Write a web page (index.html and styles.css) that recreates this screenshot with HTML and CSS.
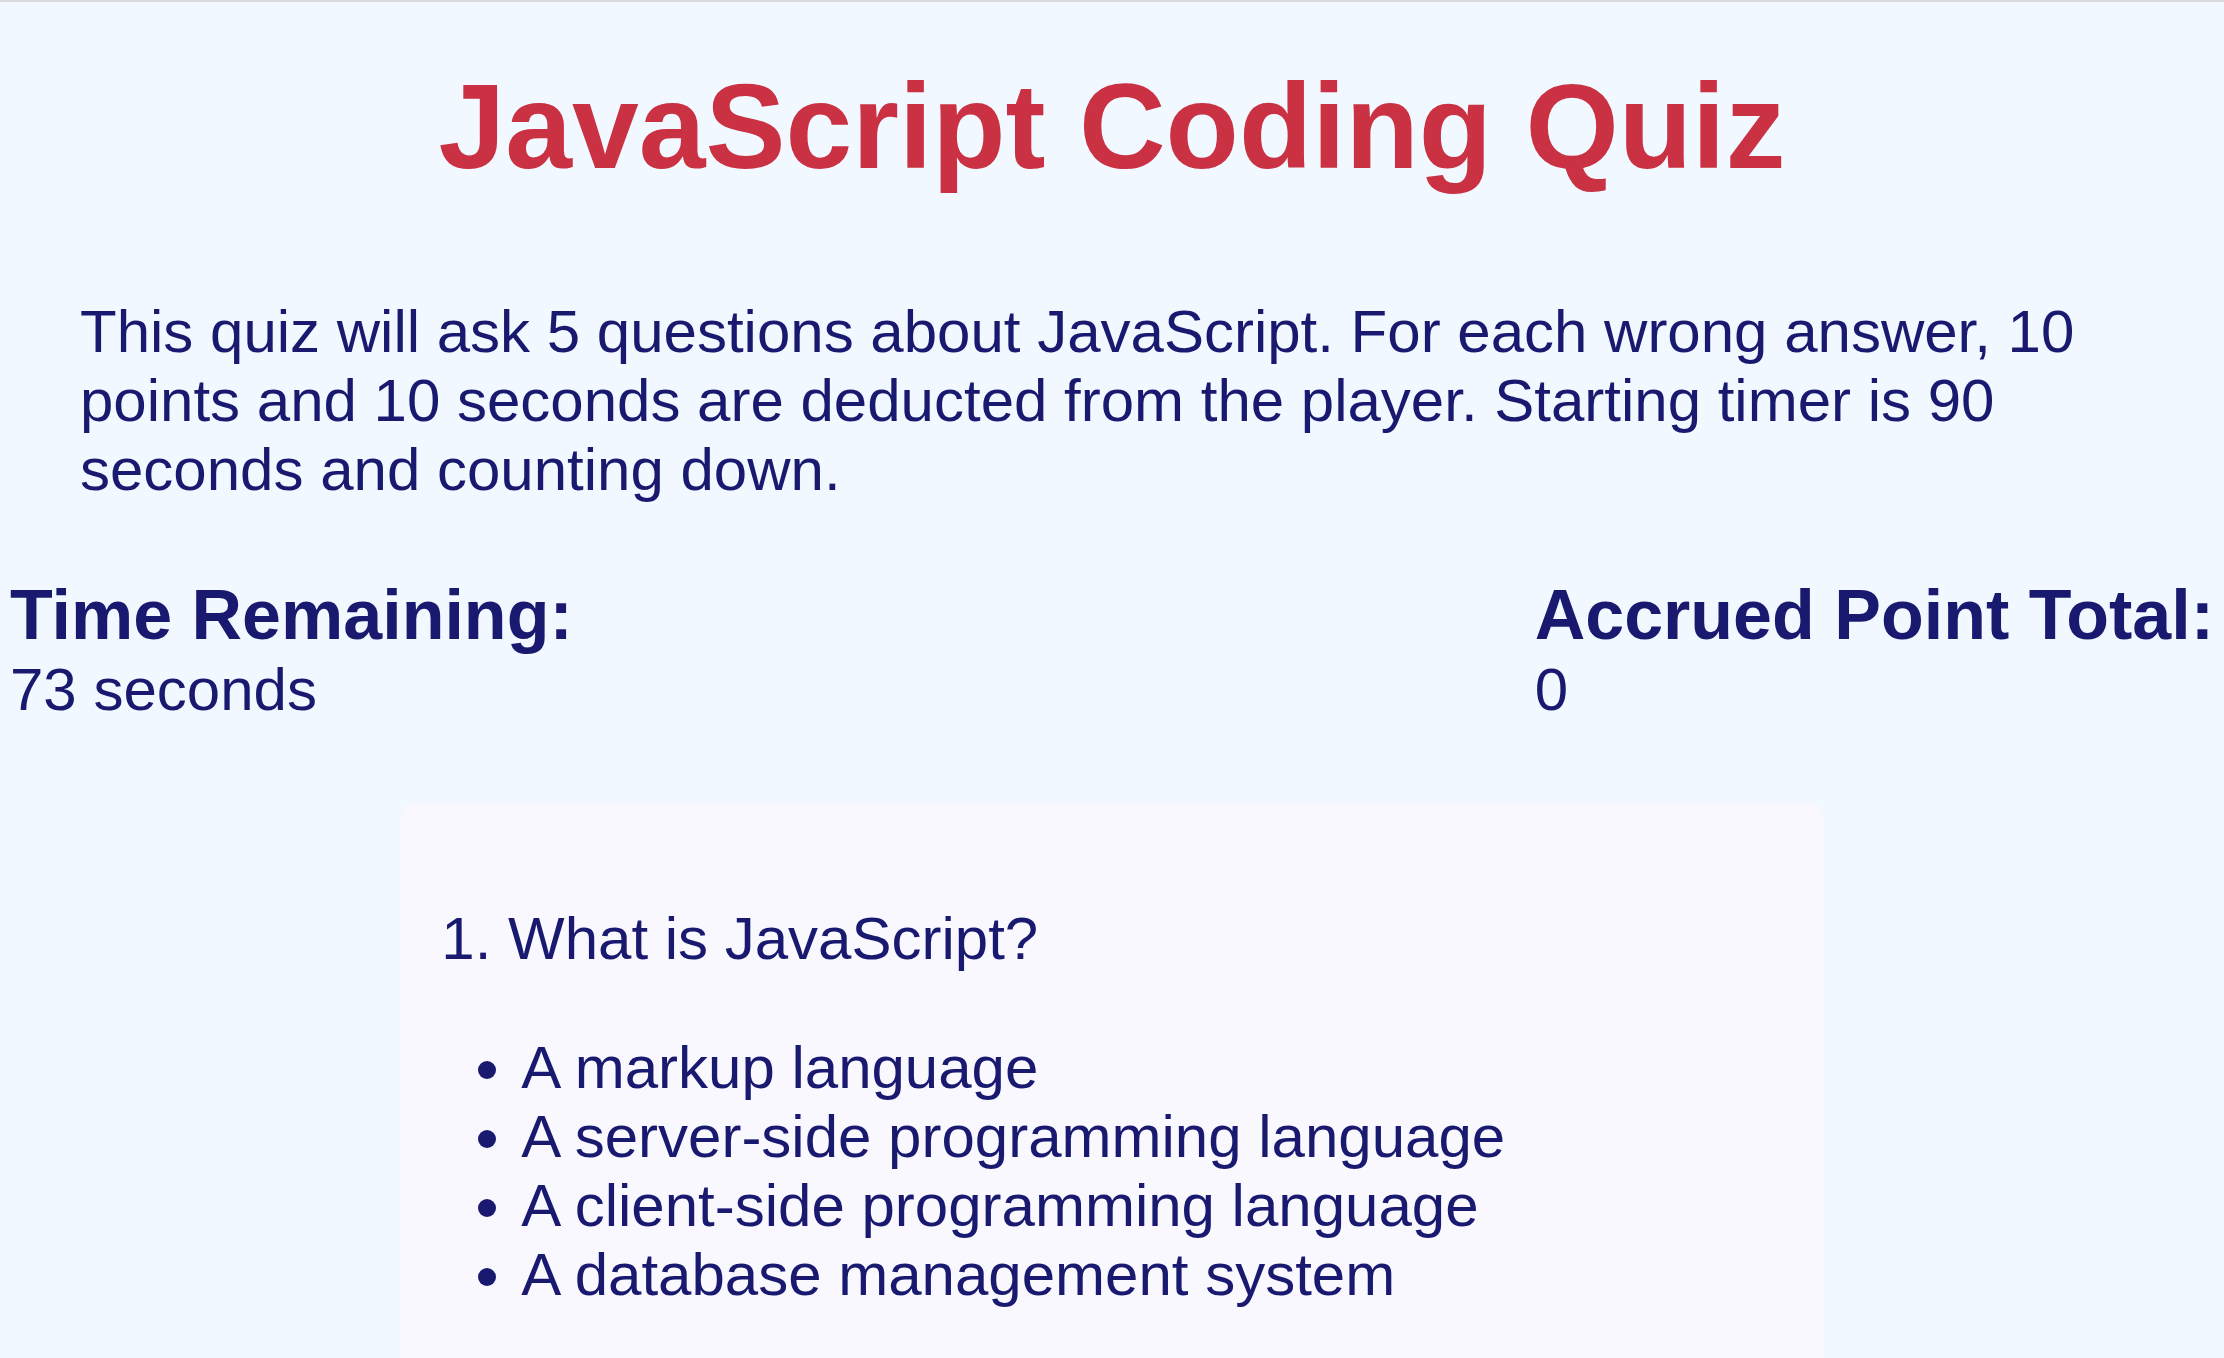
FILE: index.html
```html
<!DOCTYPE html>
<html lang="en">
<head>
<meta charset="utf-8">
<title>JavaScript Coding Quiz</title>
<link rel="stylesheet" href="styles.css">
</head>
<body>
<header class="header"><h1 class="title">JavaScript Coding Quiz</h1></header>
<main>
<p class="intro">This quiz will ask 5 questions about JavaScript. For each wrong answer, 10 points and 10 seconds are deducted from the player. Starting timer is 90 seconds and counting down.</p>
<section class="stats">
<div><h2 class="label">Time Remaining:</h2><p class="value">73 seconds</p></div>
<div><h2 class="label">Accrued Point Total:</h2><p class="value">0</p></div>
</section>
<section class="quiz">
<p class="question">1. What is JavaScript?</p>
<ul class="answers">
<li>A markup language</li>
<li>A server-side programming language</li>
<li>A client-side programming language</li>
<li>A database management system</li>
</ul>
</section>
</main>
</body>
</html>
```
FILE: styles.css
```css
* { box-sizing: border-box; }
body {
  margin: 0;
  border-top: 2px solid #dadbde;
  background: #f2f8ff;
  color: #191970;
  font: 60px/69px "Liberation Sans", Arial, sans-serif;
}
.title {
  margin: 0;
  padding: 55px 0;
  color: #ca3142;
  font-size: 120px;
  line-height: 138px;
  text-align: center;
}
.intro { margin: 47px 80px 71px; }
.stats {
  display: flex;
  justify-content: space-between;
  padding: 0 10px;
}
.label { margin: 0; font-size: 70px; line-height: 80px; }
.value { margin: 0; }
.quiz {
  width: 64%;
  margin: 80px auto 0;
  padding: 100px 41px;
  border-radius: 16px;
  background: #f9f8ff;
}
.question { margin: 0 0 60px; }
.answers { margin: 0; padding-left: 80px; }
```
